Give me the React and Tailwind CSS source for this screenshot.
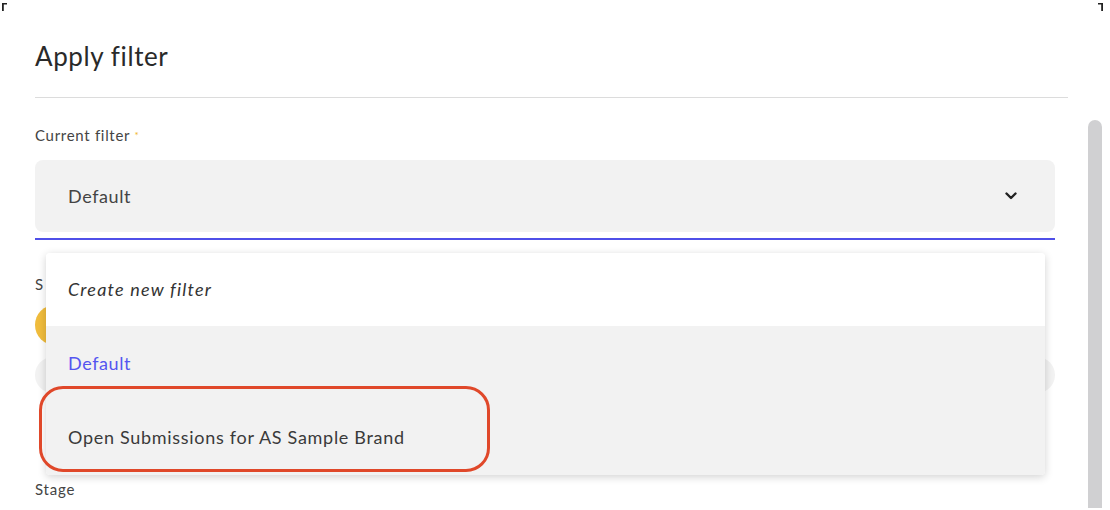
import React from "react";

export default function App() {
  const font = { fontFamily: "Lato, 'Noto Sans', sans-serif" };
  return (
    <div className="relative w-[1110px] h-[510px] overflow-hidden bg-white" style={font}>
      {/* corner crop marks */}
      <svg className="absolute left-[2px] top-[3px]" width="6" height="8" viewBox="0 0 6 8">
        <path d="M0 0 H5 V1.5 H1.8 V8 H0 Z" fill="#222" />
      </svg>
      <svg className="absolute left-[1098px] top-[3px]" width="6" height="8" viewBox="0 0 6 8">
        <path d="M0 0 H5 V8 H3.2 V1.5 H0 Z" fill="#222" />
      </svg>

      {/* scrollbar */}
      <div className="absolute left-[1088px] top-[120px] w-[14px] h-[388px] rounded-t-full bg-[#d0d0d2]" />

      {/* page content */}
      <div className="flex flex-col pl-[35px] w-[1068px] text-[#3b3b3b]">
        <h1 className="pt-[40px] h-[97px] text-[26px] leading-[32px] tracking-[0.6px] font-normal text-[#2a2a2a]">Apply filter</h1>
        <div className="h-px bg-[#dcdcdc]" />

        <div className="w-[1020px] flex flex-col">
          <div className="mt-[28px] text-[15px] leading-[18px] tracking-[0.7px] text-[#444]">
            Current filter <span className="text-[#f0b429] text-[10px] align-top">*</span>
          </div>
          <div className="mt-[16px] h-[72px] rounded-lg bg-[#f2f2f2] flex items-center justify-between pl-[33px] pr-[38px]">
            <span className="text-[18px] tracking-[0.6px] text-[#444]">Default</span>
            <svg width="12" height="8" viewBox="0 0 12 8">
              <path d="M1.5 1.5 L6 6 L10.5 1.5" fill="none" stroke="#222" strokeWidth="2.4" strokeLinecap="round" strokeLinejoin="round" />
            </svg>
          </div>
          <div className="mt-[6px] h-[2px] bg-[#4f4fe8]" />

          {/* fields behind the dropdown */}
          <div className="mt-[35px] w-[11px] overflow-hidden whitespace-nowrap text-[15px] leading-[18px] tracking-[0.7px] text-[#444]">S</div>
          <div className="mt-[12px] w-[40px] h-[40px] rounded-full bg-[#f0bc3c]" />
          <div className="mt-[12px] h-[36px] rounded-full bg-[#f2f2f2]" />
          <div className="mt-[87px] text-[15px] leading-[18px] tracking-[0.8px] text-[#444]">Stage</div>
        </div>
      </div>

      {/* dropdown menu */}
      <div className="absolute left-[46px] top-[253px] w-[999px] flex flex-col rounded-[4px] bg-white shadow-[0_2px_8px_rgba(0,0,0,0.18)] overflow-hidden">
        <div className="h-[73px] flex items-center pl-[22px] bg-white">
          <span className="text-[18px] italic tracking-[1.2px] text-[#333]">Create new filter</span>
        </div>
        <div className="h-[74px] flex items-center pl-[22px] bg-[#f2f2f2]">
          <span className="text-[18px] tracking-[0.6px] text-[#5555f0]">Default</span>
        </div>
        <div className="h-[75px] flex items-center pl-[22px] bg-[#f2f2f2]">
          <span className="text-[18px] tracking-[0.7px] text-[#3a3a3a]">Open Submissions for AS Sample Brand</span>
        </div>
      </div>

      {/* highlight annotation */}
      <div className="absolute left-[39px] top-[386px] w-[451px] h-[86px] rounded-[24px] border-[3px] border-[#e0482a]" />
    </div>
  );
}
